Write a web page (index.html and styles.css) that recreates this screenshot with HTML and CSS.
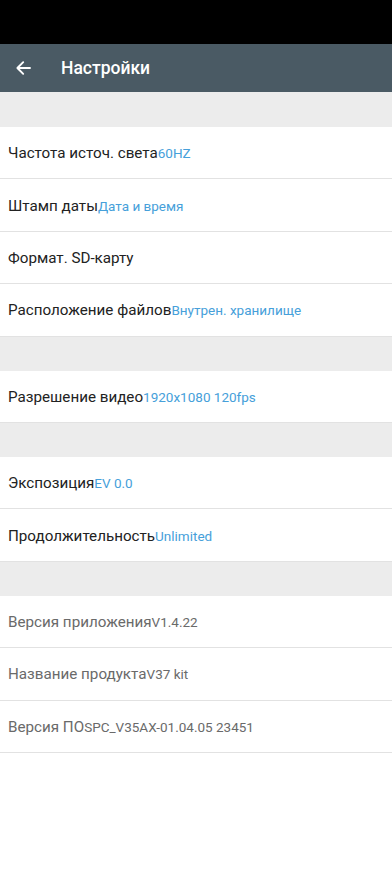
FILE: index.html
```html
<!DOCTYPE html>
<html lang="ru">
<head>
<meta charset="utf-8">
<link rel="stylesheet" href="styles.css">
</head>
<body>
<div class="status"></div>
<header class="toolbar">
  <svg class="back" width="24" height="24" viewBox="0 0 24 24"><path d="M19 12H6.5M12.2 6.2L6.4 12l5.8 5.8" fill="none" stroke="#fff" stroke-width="1.9" stroke-linecap="round" stroke-linejoin="round"/></svg>
  <span class="title">Настройки</span>
</header>
<div class="gap first"></div>
<div class="row"><p class="text"><span class="label">Частота источ. света</span><span class="value">60HZ</span></p></div>
<div class="row"><p class="text"><span class="label">Штамп даты</span><span class="value">Дата и время</span></p></div>
<div class="row"><p class="text"><span class="label">Формат. SD-карту</span></p></div>
<div class="row"><p class="text"><span class="label">Расположение файлов</span><span class="value">Внутрен. хранилище</span></p></div>
<div class="gap"></div>
<div class="row"><p class="text"><span class="label">Разрешение видео</span><span class="value">1920x1080 120fps</span></p></div>
<div class="gap"></div>
<div class="row"><p class="text"><span class="label">Экспозиция</span><span class="value">EV 0.0</span></p></div>
<div class="row"><p class="text"><span class="label">Продолжительность</span><span class="value">Unlimited</span></p></div>
<div class="gap"></div>
<div class="row info"><p class="text"><span class="label">Версия приложения</span><span class="value">V1.4.22</span></p></div>
<div class="row info"><p class="text"><span class="label">Название продукта</span><span class="value">V37 kit</span></p></div>
<div class="row info"><p class="text"><span class="label">Версия ПО</span><span class="value">SPC_V35AX-01.04.05 23451</span></p></div>
</body>
</html>
```
FILE: styles.css
```css
html, body {
  margin: 0;
  padding: 0;
  background: #fff;
  font-family: Roboto, "Noto Sans", sans-serif;
}
.status {
  height: 44px;
  background: #000;
}
.toolbar {
  height: 48px;
  background: #4a5a64;
  display: flex;
  align-items: center;
  box-sizing: border-box;
  padding-left: 11px;
}
.back {
  width: 24px;
  height: 24px;
}
.title {
  color: #fff;
  font-size: 17.5px;
  font-weight: 500;
  margin-left: 26px;
}
.gap {
  height: 34px;
  background: #ececec;
}
.gap.first {
  height: 35px;
}
.row {
  height: 52.4px;
  box-sizing: border-box;
  border-bottom: 1px solid #e2e2e2;
  display: flex;
  align-items: center;
  padding-left: 8px;
  padding-top: 1px;
}
.text {
  margin: 0;
  line-height: 20px;
}
.label {
  font-size: 15.2px;
  color: #222;
}
.value {
  font-size: 13.5px;
  color: #46a0da;
}
.info .label {
  color: #6a6a6a;
}
.info .value {
  color: #6a6a6a;
}
```
